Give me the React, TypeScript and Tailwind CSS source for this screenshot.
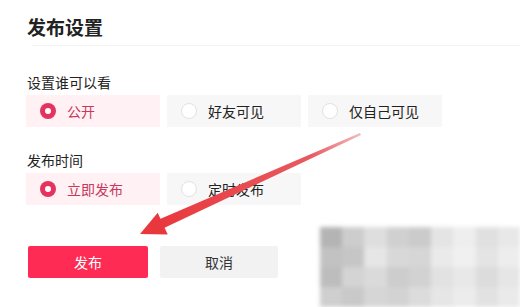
import React from "react";

const font = { fontFamily: '"Noto Sans CJK SC", "Noto Sans", sans-serif' };

function Radio({ checked }: { checked: boolean }) {
  return checked ? (
    <span className="w-[16px] h-[16px] rounded-full bg-[#e5335f] flex items-center justify-center shrink-0">
      <span className="w-[6px] h-[6px] rounded-full bg-white" />
    </span>
  ) : (
    <span className="w-[16px] h-[16px] rounded-full border border-[#e2e2e2] bg-white shrink-0" />
  );
}

function Option({ label, checked }: { label: string; checked: boolean }) {
  return (
    <div
      className={`w-[134px] h-[32px] flex items-center pl-[14px] gap-[11px] text-[14px] ${
        checked ? "bg-[#fff1f4] text-[#c8385b]" : "bg-[#f7f7f7] text-[#222]"
      }`}
    >
      <Radio checked={checked} />
      <span className="leading-[20px]">{label}</span>
    </div>
  );
}

const wm = [
  ["#b4b4b4", "#c2c2c2", "#bdbdbd", "#cfcfcf"],
  ["#cdcdcd", "#c6c6c6", "#d4d4d4", "#c9c9c9"],
  ["#dedede", "#e6e6e6", "#dadada", "#d6d6d6"],
  ["#d0d0d0", "#d8d8d8", "#cdcdcd", "#d3d3d3"],
  ["#cbcbcb", "#d6d6d6", "#d2d2d2", "#dcdcdc"],
  ["#e4e4e4", "#eaeaea", "#e2e2e2", "#e6e6e6"],
  ["#eeeeee", "#f0f0f0", "#e8e8e8", "#ececec"],
  ["#e0e0e0", "#e4e4e4", "#dcdcdc", "#e2e2e2"],
  ["#e8e8e8", "#ededed", "#e6e6e6", "#eaeaea"],
];

export default function App() {
  return (
    <div className="w-[520px] h-[307px] bg-white relative overflow-hidden" style={font}>
      <div className="pt-[14px] pl-[27px] text-[19px] leading-[26px] font-bold text-[#222]">发布设置</div>
      <div className="mt-[5px] ml-[32px] h-px bg-[#f3f3f3]" />
      <div className="mt-[26px] pl-[27px] text-[14px] leading-[20px] text-[#222]">设置谁可以看</div>
      <div className="mt-[3px] pl-[26px] flex gap-[7px]">
        <Option label="公开" checked />
        <Option label="好友可见" checked={false} />
        <Option label="仅自己可见" checked={false} />
      </div>
      <div className="mt-[23px] pl-[27px] text-[14px] leading-[20px] text-[#222]">发布时间</div>
      <div className="mt-[3px] pl-[26px] flex gap-[7px]">
        <Option label="立即发布" checked />
        <Option label="定时发布" checked={false} />
      </div>
      <div className="mt-[41px] pl-[28px] flex gap-[12px]">
        <button className="w-[120px] h-[32px] bg-[#fe2c55] text-white text-[14px] rounded-[2px]">发布</button>
        <button className="w-[118px] h-[32px] bg-[#f2f2f2] text-[#333] text-[14px] rounded-[2px]">取消</button>
      </div>

      <svg className="absolute left-0 top-0 pointer-events-none" width="520" height="307" viewBox="0 0 520 307">
        <defs>
          <linearGradient id="sh" x1="360" y1="134" x2="160" y2="226" gradientUnits="userSpaceOnUse">
            <stop offset="0" stopColor="#f2b8c0" />
            <stop offset="0.25" stopColor="#e85a5f" />
            <stop offset="1" stopColor="#e8383d" />
          </linearGradient>
        </defs>
        <polygon points="360,133 361,135 164,228 160,219" fill="url(#sh)" />
        <polygon points="140,234 157.7,212.7 167.7,234.5" fill="#e8383d" />
      </svg>

      <div className="absolute left-[320px] top-[227px] w-[200px] h-[80px] flex blur-[2px]">
        {wm.map((col, i) => (
          <div key={i} className="flex-1 flex flex-col">
            {col.map((c, j) => (
              <div key={j} className="flex-1" style={{ background: c }} />
            ))}
          </div>
        ))}
      </div>
    </div>
  );
}
